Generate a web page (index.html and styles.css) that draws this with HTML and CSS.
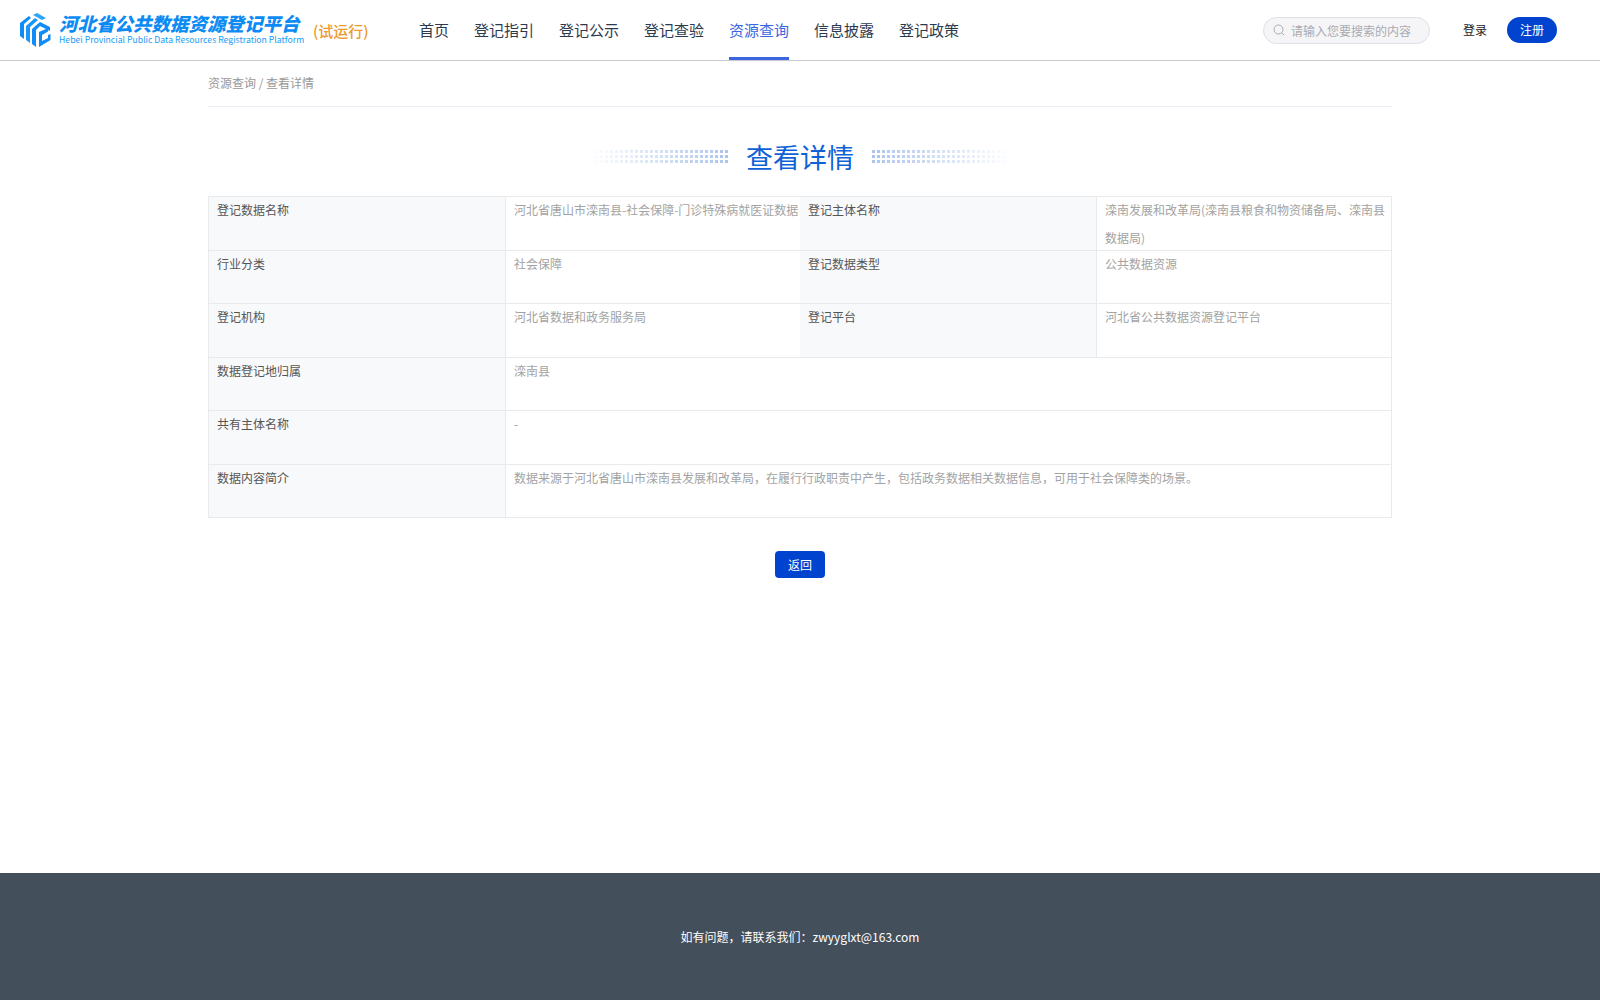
FILE: index.html
```html
<!DOCTYPE html>
<html>
<head>
<meta charset="utf-8" />
<meta name="viewport" content="width=device-width,initial-scale=1.0"/>
<title>查看详情</title>
<link rel="stylesheet" href="styles.css">
</head>
<body>

<header class="top">
  <a class="logo" href="#">
    <svg class="logo_icon" viewBox="0 0 32 36" width="32" height="36">
      <path fill="#0f8cf5" d="M1 11 10 4l2 2-7 6v15l-4-3z"/>
      <path fill="#1c97f7" d="M7 14l9-8 3 2-8 7v16l-4-3z"/>
      <path fill="#0f8cf5" d="M13 17l8-7 10 5v4l-10-5-4 4v17l-4-3z"/>
      <path fill="#2aa5f8" d="M14 3l4-2 9 5-4 2z"/>
      <path fill="#0f8cf5" d="M20 20l9-4v3.500l-6 3.500v6l6-3v-3l2.500-1v6L20 35z"/>
    </svg>
    <span class="logo_text">
      <b>河北省公共数据资源登记平台</b>
      <small>Hebei Provincial Public Data Resources Registration Platform</small>
    </span>
    <span class="logo_tag">(试运行)</span>
  </a>

  <nav class="nav">
    <a href="#">首页</a>
    <a href="#">登记指引</a>
    <a href="#">登记公示</a>
    <a href="#">登记查验</a>
    <a href="#" class="active">资源查询</a>
    <a href="#">信息披露</a>
    <a href="#">登记政策</a>
  </nav>

  <div class="search">
    <svg viewBox="0 0 12 12" width="12" height="12">
      <circle cx="5.500" cy="5.500" r="4.500" fill="none" stroke="#a8abb2" stroke-width="1"/>
      <path d="M9 9l2 2" stroke="#a8abb2" stroke-width="1" fill="none"/>
    </svg>
    <input type="text" placeholder="请输入您要搜索的内容" />
  </div>
  <a class="login" href="#">登录</a>
  <a class="register" href="#">注册</a>
</header>

<main class="main">
  <div class="crumb">资源查询 / 查看详情</div>

  <div class="title">
    <i class="dots dots_l"></i>
    <h1>查看详情</h1>
    <i class="dots dots_r"></i>
  </div>

  <table class="info">
    <tr>
      <td class="label"><div>登记数据名称</div></td>
      <td class="val"><div>河北省唐山市滦南县-社会保障-门诊特殊病就医证数据</div></td>
      <td class="label"><div>登记主体名称</div></td>
      <td class="val"><div>滦南发展和改革局(滦南县粮食和物资储备局、滦南县数据局)</div></td>
    </tr>
    <tr>
      <td class="label"><div>行业分类</div></td>
      <td class="val"><div>社会保障</div></td>
      <td class="label"><div>登记数据类型</div></td>
      <td class="val"><div>公共数据资源</div></td>
    </tr>
    <tr>
      <td class="label"><div>登记机构</div></td>
      <td class="val"><div>河北省数据和政务服务局</div></td>
      <td class="label"><div>登记平台</div></td>
      <td class="val"><div>河北省公共数据资源登记平台</div></td>
    </tr>
    <tr>
      <td class="label"><div>数据登记地归属</div></td>
      <td class="val" colspan="3"><div>滦南县</div></td>
    </tr>
    <tr>
      <td class="label"><div>共有主体名称</div></td>
      <td class="val" colspan="3"><div>-</div></td>
    </tr>
    <tr>
      <td class="label"><div>数据内容简介</div></td>
      <td class="val" colspan="3"><div>数据来源于河北省唐山市滦南县发展和改革局，在履行行政职责中产生，包括政务数据相关数据信息，可用于社会保障类的场景。</div></td>
    </tr>
  </table>

  <div class="back_wrap"><a class="back" href="#">返回</a></div>
</main>

<footer class="foot">如有问题，请联系我们：zwyyglxt@163.com</footer>

</body>
</html>
```

FILE: styles.css
```css
* {
     box-sizing: border-box;
}
body {
     margin: 0;
     min-height: 100vh;
     display: flex;
     flex-direction: column;
     font-family: "Noto Sans CJK SC", "Noto Sans", sans-serif;
     font-size: 12px;
     color: #333;
     background: #fff;
}
a {
     text-decoration: none;
     color: inherit;
}

/* header */
.top {
     height: 61px;
     flex: none;
     display: flex;
     align-items: center;
     padding: 0 43px 0 19px;
     border-bottom: 1px solid #c8c9cc;
}
.logo {
     display: flex;
     align-items: center;
     width: 400px;
     flex: none;
}
.logo_icon {
     flex: none;
     margin-right: 8px;
}
.logo_text {
     display: flex;
     flex-direction: column;
     width: 248px;
     flex: none;
     padding-bottom: 3px;
}
.logo_text b {
     font-size: 18.500px;
     line-height: 22px;
     font-style: italic;
     font-weight: 900;
     color: #0b8bf3;
     white-space: nowrap;
}
.logo_text small {
     font-size: 8.700px;
     line-height: 11px;
     color: #1a9bf5;
     white-space: nowrap;
}
.logo_tag {
     margin-left: 6px;
     font-size: 15px;
     font-weight: 500;
     color: #ee9a2d;
     white-space: nowrap;
}
.nav {
     display: flex;
     gap: 25px;
     height: 60px;
}
.nav a {
     font-size: 15px;
     line-height: 60px;
     color: #2c3a50;
     border-bottom: 3px solid transparent;
}
.nav a.active {
     color: #3a66e0;
     border-bottom-color: #3a66e0;
}
.search {
     margin-left: auto;
     width: 167px;
     height: 27px;
     display: flex;
     align-items: center;
     gap: 6px;
     padding-left: 9px;
     background: #f5f5f7;
     border: 1px solid #dcdfe6;
     border-radius: 14px;
}
.search svg {
     flex: none;
}
.search input {
     width: 125px;
     border: 0;
     outline: none;
     padding: 0;
     background: transparent;
     font: 12px "Noto Sans CJK SC", sans-serif;
}
.search input::placeholder {
     color: #a8abb2;
}
.login {
     margin-left: 33px;
     padding-bottom: 2px;
     color: #222;
}
.register {
     margin-left: 20px;
     width: 50px;
     height: 26px;
     line-height: 26px;
     text-align: center;
     border-radius: 13px;
     color: #fff;
     background: #0043ce;
}

/* content */
.main {
     flex: 1;
     width: 1184px;
     margin: 0 auto;
}
.crumb {
     height: 46px;
     line-height: 43px;
     color: #999;
     border-bottom: 1px solid #ebeef5;
}
.title {
     display: flex;
     justify-content: center;
     align-items: center;
     gap: 17px;
     height: 89px;
     padding-top: 10px;
}
.title h1 {
     margin: 0;
     font-size: 27px;
     font-weight: 400;
     color: #0f62d6;
}
.dots {
     width: 140px;
     height: 15px;
     background-image: radial-gradient(circle at center, #a9c3ee 1.400px, transparent 1.900px);
     background-size: 5px 5px;
}
.dots_l {
     -webkit-mask-image: linear-gradient(to right, transparent, #000);
     mask-image: linear-gradient(to right, transparent, #000);
}
.dots_r {
     -webkit-mask-image: linear-gradient(to left, transparent, #000);
     mask-image: linear-gradient(to left, transparent, #000);
}
.info {
     width: 100%;
     table-layout: fixed;
     border-collapse: collapse;
     border: 1px solid #e8eaec;
}
.info td {
     height: 53.450px;
     line-height: 27.500px;
     vertical-align: top;
     border-bottom: 1px solid #e8eaec;
}
.info td > div {
     margin: -1px 0 -1px;
}
.label {
     width: 297px;
     padding: 0 8px;
     background: #f8f9fb;
     border-right: 1px solid #e8eaec;
     color: #555;
}
.val {
     width: 294.500px;
     padding: 0 0 0 8px;
     color: #a3a3a3;
}
.val + .label {
     width: 296.500px;
}
.info tr:first-child .val:last-child {
     width: auto;
}
.back_wrap {
     text-align: center;
     margin-top: 33px;
}
.back {
     display: inline-block;
     width: 50px;
     height: 27px;
     line-height: 27px;
     border-radius: 4px;
     color: #fff;
     background: #0043ce;
}

/* footer */
.foot {
     flex: none;
     height: 127px;
     line-height: 127px;
     text-align: center;
     color: #fff;
     background: #434f5b;
}
```
